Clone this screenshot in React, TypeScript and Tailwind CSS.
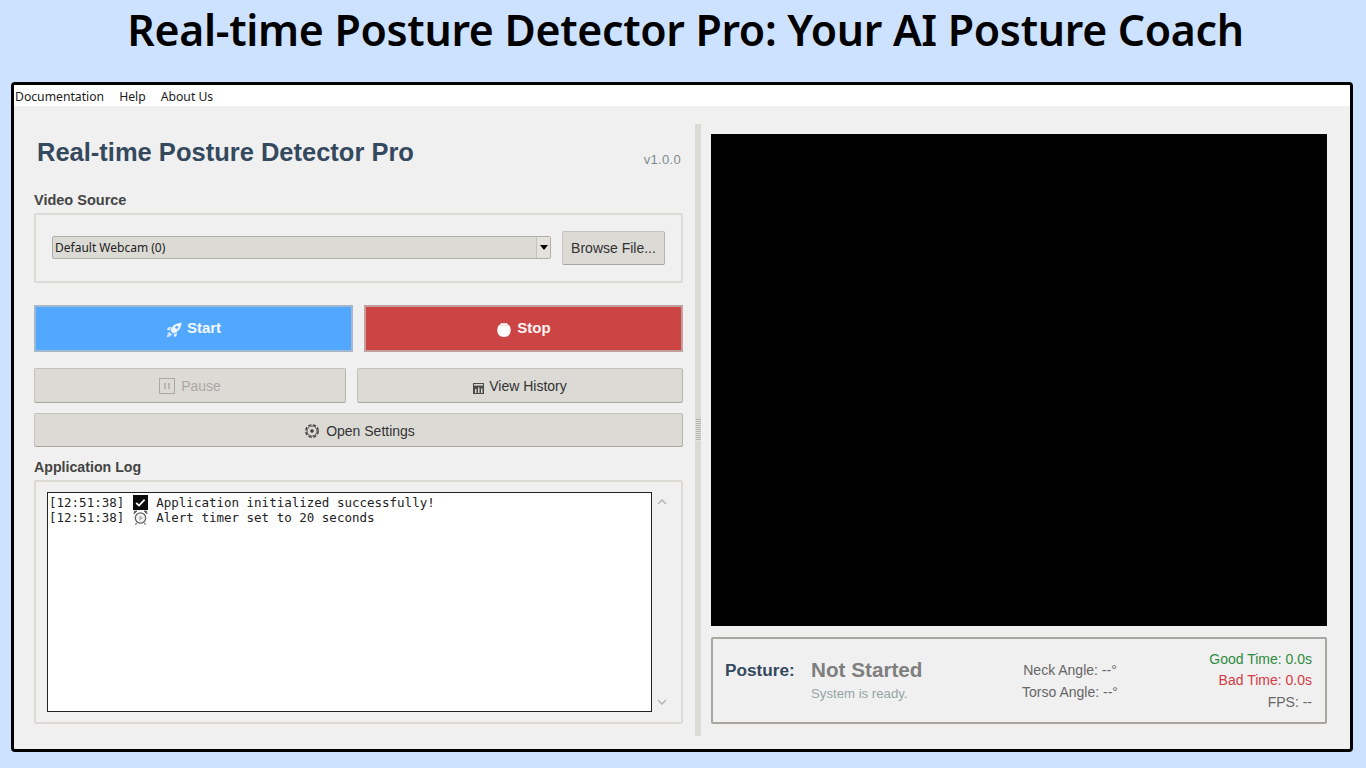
import React from 'react';

const uiFont = "font-['Liberation_Sans',Arial,sans-serif]";

const RocketIcon = () => (
  <svg width="16" height="16" viewBox="0 0 16 16" className="mt-[3px]">
    <path d="M15.6 0.8C11.6 1 8 2.4 5.6 5.4L4.4 8.6l3 3 3.2-1.4C13.6 8 15.2 4.8 15.6 0.8z" fill="#eef6ff" />
    <path d="M5.2 4.8L2 5.6 0.8 8l3 .2zM11.2 10.800l-.8 3.200-2.400 1.200-.2-3z" fill="#dcedff" />
    <path d="M3.4 9.800l2.800 2.800-2 1.800-3.400.8.800-3.400z" fill="#c8e2ff" />
    <circle cx="10.800" cy="5.200" r="1.500" fill="#52a8ff" />
  </svg>
);

const StopIcon = () => (
  <svg width="16" height="16" viewBox="0 0 16 16" className="mt-[3px]">
    <path d="M5 1.200h6l1 1.400 2 1.600.8 3.800-.8 3.800-2.200 2.400-3.800.8-3.800-.8L1.900 11.800 1.200 8l.8-3.800 2-1.600z" fill="#fff" />
    <path d="M4 3.600h8" stroke="#f0d0d0" strokeWidth="0.8" />
  </svg>
);

const PauseIcon = () => (
  <svg width="16" height="16" viewBox="0 0 16 16">
    <rect x="0.5" y="0.5" width="15" height="15" fill="none" stroke="#a9a8a3" />
    <path d="M6 5v6M10 5v6" stroke="#a9a8a3" strokeWidth="1.4" />
  </svg>
);

const ChartIcon = () => (
  <svg width="11" height="11" viewBox="0 0 11 11" className="mt-[5px]">
    <rect width="11" height="11" fill="#4a4a48" />
    <rect x="1" y="1" width="9" height="1.6" fill="#d8d6d0" />
    <rect x="2" y="6" width="1.5" height="4" fill="#d8d6d0" />
    <rect x="5" y="4.5" width="1.5" height="5.5" fill="#d8d6d0" />
    <rect x="8" y="5.5" width="1.5" height="4.5" fill="#d8d6d0" />
  </svg>
);

const GearIcon = () => (
  <svg width="16" height="16" viewBox="0 0 16 16">
    <circle cx="8" cy="8" r="6.2" fill="none" stroke="#3c3c3a" strokeWidth="1.4" strokeDasharray="3.4 1.5" />
    <circle cx="8" cy="8" r="5" fill="none" stroke="#3c3c3a" strokeWidth="0.8" />
    <circle cx="8" cy="8" r="1.8" fill="#3c3c3a" />
  </svg>
);

const CheckIcon = () => (
  <svg width="15" height="15" viewBox="0 0 15 15" className="shrink-0">
    <rect width="15" height="15" fill="#0c0c0c" />
    <path d="M3.2 8l2.800 2.600 5.600-6" fill="none" stroke="#fff" strokeWidth="1.8" />
  </svg>
);

const ClockIcon = () => (
  <svg width="15" height="15" viewBox="0 0 15 15" className="shrink-0">
    <circle cx="7.5" cy="8" r="5.2" fill="#f2f2f2" stroke="#666" strokeWidth="1.3" />
    <path d="M1 4l3-3h-2.500zM14 4l-3-3h2.500z" fill="#666" stroke="#666" />
    <path d="M6.300 5.600v4.800L10.200 8z" fill="#b4b4b4" />
    <path d="M3.500 13l-1 1.600M11.500 13l1 1.600" stroke="#666" strokeWidth="1.2" />
  </svg>
);

const Chevron = ({ up }: { up?: boolean }) => (
  <svg width="10" height="6" viewBox="0 0 10 6">
    <path d={up ? 'M1 5l4-4 4 4' : 'M1 1l4 4 4-4'} fill="none" stroke="#b8b8b8" strokeWidth="1.6" />
  </svg>
);

const flatButton =
  'flex items-center justify-center rounded-[2px] border border-[#c4c2bb] border-b-[#a8a6a0] border-r-[#b5b3ac] bg-[#dcdad5]';

const App: React.FC = () => {
  return (
    <div className={`h-[768px] w-[1366px] overflow-hidden bg-[#cce2ff] ${uiFont}`}>
      <h1 className="flex h-[82px] items-start justify-center pl-[5px] pt-[2px] font-['Noto_Sans',sans-serif] text-[42.8px] font-semibold leading-[56px] tracking-[-0.3px] text-black">
        Real-time Posture Detector Pro: Your AI Posture Coach
      </h1>

      <div className="mx-[11px] h-[670px] w-[1342px] overflow-hidden rounded-[4px] border-[3px] border-black bg-[#f0f0f0]">
        {/* menu bar */}
        <div className="flex h-[21px] items-center gap-[15px] bg-white pl-[1px] pt-[3px] font-['Noto_Sans',sans-serif] text-[12.2px] text-[#1c1c1c]">
          <span>Documentation</span>
          <span>Help</span>
          <span>About Us</span>
        </div>

        <div className="flex pt-[18px]">
          {/* left panel */}
          <div className="ml-[20px] flex w-[649px] flex-col">
            <div className="flex h-[64px] items-start justify-between">
              <span className="ml-[3px] mt-[12px] text-[25.5px] font-bold leading-[32px] text-[#34495e]">
                Real-time Posture Detector Pro
              </span>
              <span className="mr-[2px] mt-[28px] text-[13px] leading-[16px] tracking-[0.3px] text-[#7f8c8d]">v1.0.0</span>
            </div>

            <div className="flex h-[25px] items-center text-[14.5px] font-bold text-[#444]">Video Source</div>
            <div className="flex h-[70px] items-center gap-[11px] rounded-[2px] border-2 border-[#dcdad5] pl-[16px] pr-[16px]">
              <div className="-mt-[2px] flex h-[23px] flex-1 items-center justify-between rounded-[2px] border border-[#b0aea6] bg-[#dcdad5] pl-[2px]">
                <span className="pt-[1px] font-['Noto_Sans',sans-serif] text-[12px] text-[#222]">Default Webcam (0)</span>
                <span className="flex h-full w-[14px] items-center justify-center border-l border-[#c4c2bb] bg-[#e4e2dd]">
                  <span className="h-0 w-0 border-x-[4px] border-t-[5px] border-x-transparent border-t-black" />
                </span>
              </div>
              <div className={`${flatButton} h-[34px] w-[103px] text-[14px] text-[#333]`}>Browse File...</div>
            </div>

            <div className="mt-[22px] flex h-[47px] gap-[11px]">
              <div className="flex flex-1 items-center justify-center gap-[5px] border-2 border-[#a3b8cc] bg-[#52a8ff] text-[15px] font-bold text-[#f2f8ff]">
                <RocketIcon />
                <span>Start</span>
              </div>
              <div className="flex flex-1 items-center justify-center gap-[5px] border-2 border-[#c2a0a0] bg-[#cc4444] text-[15px] font-bold text-[#fff3f3]">
                <StopIcon />
                <span>Stop</span>
              </div>
            </div>

            <div className="mt-[16px] flex h-[35px] gap-[11px]">
              <div className={`${flatButton} w-[312px] gap-[6px] pt-[1px] text-[14px] text-[#a9a8a3]`}>
                <PauseIcon />
                <span>Pause</span>
              </div>
              <div className={`${flatButton} flex-1 gap-[5px] pt-[1px] text-[14px] text-[#333]`}>
                <ChartIcon />
                <span>View History</span>
              </div>
            </div>

            <div className={`${flatButton} mt-[10px] h-[34px] gap-[6px] pl-[2px] pt-[2px] text-[14px] text-[#333]`}>
              <GearIcon />
              <span>Open Settings</span>
            </div>

            <div className="flex h-[33px] items-end pb-[4px] text-[14.2px] font-bold leading-[18px] text-[#444]">Application Log</div>
            <div className="flex h-[244px] gap-[5px] rounded-[2px] border-2 border-[#dcdad5] pb-[10px] pl-[11px] pr-[14px] pt-[10px]">
              <div className="flex-1 border border-[#222] bg-white px-[1px] pt-[2px] font-['DejaVu_Sans_Mono',monospace] text-[12.5px] leading-[15px] text-[#222]">
                <div className="flex items-center">
                  <span>[12:51:38]</span>
                  <span className="ml-[9px] mr-[8px]"><CheckIcon /></span>
                  <span>Application initialized successfully!</span>
                </div>
                <div className="flex items-center">
                  <span>[12:51:38]</span>
                  <span className="ml-[9px] mr-[8px]"><ClockIcon /></span>
                  <span>Alert timer set to 20 seconds</span>
                </div>
              </div>
              <div className="flex w-[10px] flex-col items-center justify-between py-[7px]">
                <Chevron up />
                <Chevron />
              </div>
            </div>
          </div>

          {/* splitter */}
          <div className="ml-[12px] flex h-[612px] w-[6px] items-center justify-center bg-[#dcdad5]">
            <span className="h-[22px] w-[5px] bg-[repeating-linear-gradient(to_bottom,#b5b3ac_0,#b5b3ac_1px,#e4e2dd_1px,#e4e2dd_2px)]" />
          </div>

          {/* right panel */}
          <div className="ml-[10px] flex w-[616px] flex-col pt-[10px]">
            <div className="h-[492px] bg-black" />
            <div className="mt-[11px] flex h-[87px] items-center rounded-[2px] border-2 border-[#a8a6a0] pl-[12px] pr-[13px]">
              <span className="mb-[22px] w-[86px] text-[17.2px] font-bold leading-[20px] text-[#34495e]">Posture:</span>
              <div className="-mt-[2px] flex w-[197px] flex-col">
                <span className="text-[20.7px] font-bold leading-[24px] text-[#7f7f7f]">Not Started</span>
                <span className="mt-[3px] text-[13.2px] leading-[17px] text-[#95a5a6]">System is ready.</span>
              </div>
              <div className="flex w-[124px] flex-col items-center text-[14px] leading-[22px] text-[#666]">
                <span>Neck Angle: --°</span>
                <span>Torso Angle: --°</span>
              </div>
              <div className="mt-[1px] flex flex-1 flex-col items-end text-[14px] leading-[21.5px]">
                <span className="text-[#2e8b3f]">Good Time: 0.0s</span>
                <span className="text-[#d43a45]">Bad Time: 0.0s</span>
                <span className="text-[#666]">FPS: --</span>
              </div>
            </div>
          </div>
        </div>
      </div>
    </div>
  );
};

export default App;
